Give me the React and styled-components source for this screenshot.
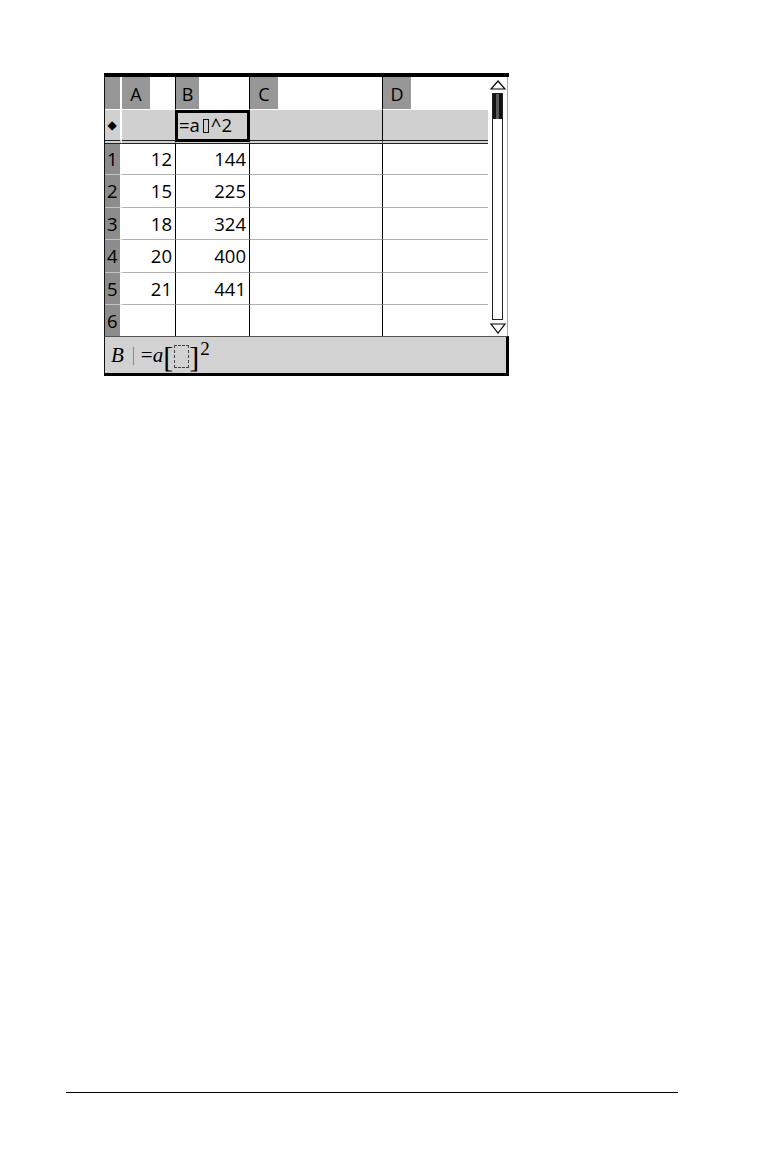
import React from "react";
import styled, { createGlobalStyle } from "styled-components";

const GlobalStyle = createGlobalStyle`
  html, body { margin: 0; padding: 0; background: #fff; }
  body { font-family: "Open Sans", "Noto Sans", sans-serif; color: #000; }
  * { box-sizing: border-box; }
`;

const Page = styled.div`
  width: 764px;
  height: 1160px;
  display: flex;
  flex-direction: column;
  padding-top: 73px;
`;

const Screen = styled.div`
  margin-left: 104px;
  width: 405px;
  border-top: 4px solid #000;
  display: flex;
  flex-direction: column;
`;

const GridArea = styled.div`
  width: 404px;
  display: flex;
  border-left: 1px solid #111;
  border-right: 1px solid #a8a8a8;
`;

const Table = styled.div`
  display: grid;
  grid-template-columns: 17px 54px 74px 133px 105px;
  grid-template-rows: 33px 34px 31px 32.5px 32.5px 32.5px 32.5px 31px;
  font-size: 18.5px;
  line-height: 1;
`;

const Corner = styled.div`
  background: #979797;
  border-right: 2px solid #fff;
  border-bottom: 1px solid #fff;
`;

const ColHeader = styled.div`
  background: #fff;
  border-right: ${(p) => (p.$last ? "none" : "1px solid #000")};
  border-bottom: 1px solid #fff;
  display: flex;
`;

const ColLabel = styled.div`
  width: ${(p) => p.$w}px;
  height: 100%;
  background: #979797;
  display: flex;
  align-items: center;
  justify-content: center;
  font-size: 18px;
  padding-top: 1px;
`;

const FormulaHead = styled.div`
  background: #d0d0d0;
  border-right: 2px solid #fff;
  border-bottom: 4px double #222;
  display: flex;
  align-items: center;
  justify-content: center;
  font-family: "DejaVu Sans", sans-serif;
  font-size: 12px;
  padding-right: 1px;
`;

const FormulaCell = styled.div`
  position: relative;
  background: #d0d0d0;
  border-right: ${(p) => (p.$last ? "none" : "1px solid #000")};
  border-bottom: 4px double #222;
  display: flex;
  align-items: center;
  padding-left: 3px;
  font-size: 18.5px;
  ${(p) =>
    p.$selected &&
    `
    &::after {
      content: "";
      position: absolute;
      left: -1px;
      right: -1px;
      top: 0;
      bottom: -2px;
      border: 3px solid #000;
    }
  `}
`;

const PlaceBox = styled.span`
  display: inline-block;
  width: 6px;
  height: 14px;
  border: 1.5px solid #111;
  margin: 0 2px 0 3px;
  position: relative;
  top: 1px;
`;

const RowHead = styled.div`
  background: #8c8c8c;
  border-right: 2px solid #fff;
  border-bottom: ${(p) => (p.$lastRow ? "none" : "1.5px solid #c4c4c4")};
  display: flex;
  align-items: center;
  padding-left: 2px;
  padding-top: 1px;
`;

const DataCell = styled.div`
  background: #fff;
  border-right: ${(p) => (p.$last ? "none" : "1px solid #000")};
  border-bottom: ${(p) => (p.$lastRow ? "none" : "1.5px solid #b2b2b2")};
  display: flex;
  align-items: center;
  justify-content: flex-end;
  padding-right: 3px;
  padding-top: 1px;
`;

const ScrollCol = styled.div`
  width: 19px;
  display: flex;
  flex-direction: column;
  align-items: center;
  padding: 3px 0 2px;
  gap: 3px;
`;

const Track = styled.div`
  flex: 1;
  width: 11px;
  border: 1px solid #222;
  display: flex;
  flex-direction: column;
`;

const Thumb = styled.div`
  height: 25px;
  background: linear-gradient(
    to right,
    #111 0%,
    #111 35%,
    #5a5a5a 35%,
    #5a5a5a 62%,
    #111 62%,
    #111 100%
  );
`;

const BottomBar = styled.div`
  height: 40px;
  border-top: 1px solid #555;
  border-left: 1px solid #111;
  border-right: 3px solid #000;
  border-bottom: 3px solid #000;
  background: #d2d2d2;
  display: flex;
  align-items: center;
  padding-left: 6px;
  font-family: "Liberation Serif", "Times New Roman", serif;
  font-size: 21px;
`;

const Italic = styled.span`
  font-style: italic;
`;

const Divider = styled.span`
  display: inline-block;
  width: 1px;
  height: 18px;
  background: #8a8a8a;
  margin: 2px 7px 0 9px;
`;

const Formula = styled.span`
  display: inline-flex;
  align-items: center;
  height: 100%;
`;

const Bracket = styled.span`
  font-size: 30px;
  line-height: 1;
  margin-top: 3px;
`;

const DashedBox = styled.span`
  display: inline-block;
  width: 15px;
  height: 23px;
  border: 1px dashed #444;
  margin: 3px 0 0 1px;
`;

const Sup = styled.span`
  font-size: 19px;
  align-self: flex-start;
  margin-top: 1px;
  margin-left: 1px;
`;

const FooterRule = styled.div`
  margin-top: auto;
  margin-bottom: 67px;
  margin-left: 66px;
  width: 612px;
  height: 1.5px;
  background: #000;
`;

function ArrowUp() {
  return (
    <svg width="16" height="10" viewBox="0 0 16 10">
      <polygon points="8,1 15,9 1,9" fill="#fff" stroke="#000" strokeWidth="1.2" />
    </svg>
  );
}

function ArrowDown() {
  return (
    <svg width="16" height="11" viewBox="0 0 16 11">
      <polygon points="1,1 15,1 8,10" fill="#fff" stroke="#000" strokeWidth="1.2" />
    </svg>
  );
}

const columns = [
  { key: "A", w: 28 },
  { key: "B", w: 23 },
  { key: "C", w: 28 },
  { key: "D", w: 28 },
];

const rows = [
  ["12", "144"],
  ["15", "225"],
  ["18", "324"],
  ["20", "400"],
  ["21", "441"],
  ["", ""],
];

export default function App() {
  return (
    <>
      <GlobalStyle />
      <Page>
        <Screen>
          <GridArea>
            <Table>
              <Corner />
              {columns.map((c, i) => (
                <ColHeader key={c.key} $last={i === columns.length - 1}>
                  <ColLabel $w={c.w}>{c.key}</ColLabel>
                </ColHeader>
              ))}
              <FormulaHead>◆</FormulaHead>
              <FormulaCell />
              <FormulaCell $selected>
                =a<PlaceBox />^2
              </FormulaCell>
              <FormulaCell />
              <FormulaCell $last />
              {rows.map((r, ri) => {
                const lastRow = ri === rows.length - 1;
                return (
                  <React.Fragment key={ri}>
                    <RowHead $lastRow={lastRow}>{ri + 1}</RowHead>
                    <DataCell $lastRow={lastRow}>{r[0]}</DataCell>
                    <DataCell $lastRow={lastRow}>{r[1]}</DataCell>
                    <DataCell $lastRow={lastRow} />
                    <DataCell $lastRow={lastRow} $last />
                  </React.Fragment>
                );
              })}
            </Table>
            <ScrollCol>
              <ArrowUp />
              <Track>
                <Thumb />
              </Track>
              <ArrowDown />
            </ScrollCol>
          </GridArea>
          <BottomBar>
            <Italic>B</Italic>
            <Divider />
            <Formula>
              =<Italic>a</Italic>
              <Bracket>[</Bracket>
              <DashedBox />
              <Bracket>]</Bracket>
              <Sup>2</Sup>
            </Formula>
          </BottomBar>
        </Screen>
        <FooterRule />
      </Page>
    </>
  );
}
